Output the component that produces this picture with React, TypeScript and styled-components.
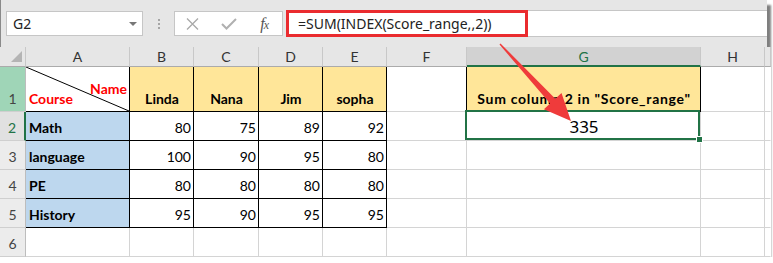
import React from 'react'
import styled, { createGlobalStyle } from 'styled-components'

const GlobalStyle = createGlobalStyle`
  html, body {
    margin: 0;
    background: #fff;
  }
  body {
    font-family: Lato, 'Noto Sans', sans-serif;
  }
`

const Window = styled.div`
  position: relative;
  width: 767px;
  height: 257px;
  background: #e6e6e6;
  box-shadow: 4px 5px 2px rgba(0, 0, 0, 0.5);
`

const FormulaBar = styled.div`
  display: flex;
  align-items: center;
  height: 47px;
  box-sizing: border-box;
  padding: 0 0 0 6px;
  box-shadow: inset 1px 0 #8a8a8a;
`

const NameBox = styled.div`
  display: flex;
  align-items: center;
  justify-content: space-between;
  width: 137px;
  height: 25px;
  box-sizing: border-box;
  padding: 0 5px 0 6px;
  background: #fff;
  border: 1px solid #c6c6c6;
  font: 14px 'Noto Sans', sans-serif;
  color: #222;
`

const DropArrow = styled.span`
  width: 0;
  height: 0;
  border-left: 4px solid transparent;
  border-right: 4px solid transparent;
  border-top: 4px solid #777;
`

const Grip = styled.div`
  display: flex;
  flex-direction: column;
  gap: 2px;
  margin: 0 14px 0 15px;
  span {
    width: 2px;
    height: 2px;
    background: #a5a5a5;
  }
`

const ButtonBox = styled.div`
  display: flex;
  width: 109px;
  height: 25px;
  box-sizing: border-box;
  background: #fff;
  border: 1px solid #c6c6c6;
`

const ToolButton = styled.div`
  flex: 1;
  display: flex;
  align-items: center;
  justify-content: center;
`

const Fx = styled.span`
  font: italic 16px 'Liberation Serif', serif;
  color: #555;
  letter-spacing: -1px;
  small {
    font-size: 12px;
  }
`

const FormulaInput = styled.div`
  flex: 1;
  display: flex;
  align-items: center;
  height: 25px;
  margin-left: 3px;
  background: #fff;
  border: 1px solid #c6c6c6;
  border-right: none;
`

const Highlight = styled.div`
  display: flex;
  align-items: center;
  width: 242px;
  height: 27px;
  margin-left: -1px;
  box-sizing: border-box;
  padding-left: 9px;
  border: 3px solid #ea2b2f;
  font: 14px 'Noto Sans', sans-serif;
  color: #222;
`

const Sheet = styled.div`
  display: grid;
  grid-template-columns: 26px 104px 64px 65px 64px 64px 80px 234px 64px 1fr;
  grid-template-rows: 20px 45px repeat(5, 29px);
  background: #fff;
`

const Corner = styled.div`
  position: relative;
  background: #e6e6e6;
  border-right: 1px solid #c8c8c8;
  border-bottom: 1px solid #ababab;
  &::after {
    content: '';
    position: absolute;
    right: 3px;
    bottom: 4px;
    border-left: 11px solid transparent;
    border-bottom: 11px solid #b4b4b4;
  }
`

const ColHeader = styled.div<{ $active?: boolean }>`
  display: flex;
  align-items: center;
  justify-content: center;
  box-sizing: border-box;
  background: ${(p) => (p.$active ? '#d2d2d2' : '#e6e6e6')};
  border-right: 1px solid #c8c8c8;
  border-bottom: ${(p) => (p.$active ? '2px solid #217346' : '1px solid #ababab')};
  font-size: 14px;
  color: ${(p) => (p.$active ? '#217346' : '#333')};
`

const RowHeader = styled.div<{ $bg?: string; $mark?: boolean }>`
  display: flex;
  align-items: flex-end;
  justify-content: center;
  box-sizing: border-box;
  padding-bottom: 3px;
  line-height: 18px;
  background: ${(p) => p.$bg || '#ececec'};
  border-right: ${(p) => (p.$mark ? '2px solid #217346' : '1px solid #bdbdbd')};
  border-bottom: 1px solid #cfcfcf;
  font-size: 14px;
  color: ${(p) => (p.$mark ? '#217346' : '#444')};
`

const Cell = styled.div<{
  $bg?: string
  $r?: string
  $b?: string
  $align?: 'left' | 'right' | 'center'
  $bold?: boolean
  $color?: string
  $spread?: boolean
}>`
  position: relative;
  display: flex;
  align-items: flex-end;
  justify-content: ${(p) =>
    p.$align === 'right' ? 'flex-end' : p.$align === 'center' ? 'center' : 'flex-start'};
  box-sizing: border-box;
  padding: 0 2px 3px 3px;
  line-height: 18px;
  white-space: nowrap;
  background: ${(p) => p.$bg || '#fff'};
  border-right: 1px solid ${(p) => p.$r || '#d4d4d4'};
  border-bottom: 1px solid ${(p) => p.$b || '#d4d4d4'};
  font-size: 14px;
  font-weight: ${(p) => (p.$bold ? 700 : 400)};
  letter-spacing: ${(p) => (p.$spread ? '0.7px' : 'normal')};
  color: ${(p) => p.$color || '#000'};
`

const SplitCell = styled(Cell)`
  justify-content: space-between;
  color: #ff0000;
  font-weight: 700;
  svg {
    position: absolute;
    inset: 0;
  }
`

const NameLabel = styled.span`
  padding-bottom: 10px;
`

const ActiveCell = styled(Cell)`
  z-index: 1;
  padding-bottom: 3px;
  font: 17px/20px 'Noto Sans', sans-serif;
  &::after {
    content: '';
    position: absolute;
    left: -2px;
    top: -2px;
    right: 0;
    bottom: 0;
    border: 2px solid #217346;
  }
  &::before {
    content: '';
    position: absolute;
    right: -3px;
    bottom: -3px;
    width: 5px;
    height: 5px;
    background: #217346;
    border: 1px solid #fff;
    z-index: 2;
  }
`

const Pointer = styled.svg`
  position: absolute;
  top: 0;
  left: 0;
  pointer-events: none;
  z-index: 5;
`

const YELLOW = '#ffe699'
const BLUE = '#bdd7ee'
const BLACK = '#000'

const columns = ['A', 'B', 'C', 'D', 'E', 'F', 'G', 'H', '']
const names = ['Linda', 'Nana', 'Jim', 'sopha']
const scores: [string, number[]][] = [
  ['Math', [80, 75, 89, 92]],
  ['language', [100, 90, 95, 80]],
  ['PE', [80, 80, 80, 80]],
  ['History', [95, 90, 95, 95]],
]

function TrailingCells({ row }: { row: number }) {
  return (
    <>
      <Cell $r={row === 1 ? BLACK : undefined} />
      {row === 1 ? (
        <Cell $bg={YELLOW} $r={BLACK} $b={BLACK} $align="center" $bold $spread>
          Sum column 2 in "Score_range"
        </Cell>
      ) : row === 2 ? (
        <ActiveCell $align="center">335</ActiveCell>
      ) : (
        <Cell />
      )}
      <Cell />
      <Cell $r="transparent" />
    </>
  )
}

export default function App() {
  return (
    <Window>
      <GlobalStyle />
      <FormulaBar>
        <NameBox>
          G2
          <DropArrow />
        </NameBox>
        <Grip>
          <span />
          <span />
          <span />
        </Grip>
        <ButtonBox>
          <ToolButton>
            <svg width="13" height="12" viewBox="0 0 13 12">
              <path d="M1 0.5 L12 11.5 M12 0.5 L1 11.5" stroke="#a9a9a9" strokeWidth="1.3" />
            </svg>
          </ToolButton>
          <ToolButton>
            <svg width="16" height="12" viewBox="0 0 16 12">
              <path d="M1 6 L5.5 10.5 L15 1" fill="none" stroke="#b0b0b0" strokeWidth="2" />
            </svg>
          </ToolButton>
          <ToolButton>
            <Fx>
              f<small>x</small>
            </Fx>
          </ToolButton>
        </ButtonBox>
        <FormulaInput>
          <Highlight>=SUM(INDEX(Score_range,,2))</Highlight>
        </FormulaInput>
      </FormulaBar>

      <Sheet>
        <Corner />
        {columns.map((c, i) => (
          <ColHeader key={i} $active={c === 'G'}>
            {c}
          </ColHeader>
        ))}

        <RowHeader $bg="#9fd5b7">1</RowHeader>
        <SplitCell $r={BLACK} $b={BLACK}>
          <svg width="100%" height="100%" preserveAspectRatio="none" viewBox="0 0 100 100">
            <line x1="0" y1="0" x2="100" y2="100" stroke="#000" strokeWidth="1" vectorEffect="non-scaling-stroke" />
          </svg>
          <span>Course</span>
          <NameLabel>Name</NameLabel>
        </SplitCell>
        {names.map((n) => (
          <Cell key={n} $bg={YELLOW} $r={BLACK} $b={BLACK} $align="center" $bold>
            {n}
          </Cell>
        ))}
        <TrailingCells row={1} />

        {scores.map(([subject, vals], i) => (
          <React.Fragment key={subject}>
            <RowHeader $bg={i === 0 ? '#e1e1e1' : undefined} $mark={i === 0}>
              {i + 2}
            </RowHeader>
            <Cell $bg={BLUE} $r={BLACK} $b={BLACK} $bold>
              {subject}
            </Cell>
            {vals.map((v, j) => (
              <Cell key={j} $r={BLACK} $b={BLACK} $align="right">
                {v}
              </Cell>
            ))}
            <TrailingCells row={i + 2} />
          </React.Fragment>
        ))}

        <RowHeader>6</RowHeader>
        {columns.map((c, i) => (
          <Cell key={i} $r={i === 8 ? 'transparent' : undefined} />
        ))}
      </Sheet>

      <Pointer width="767" height="257" viewBox="0 0 767 257">
        <polygon
          points="499.5,44.5 550.1,103.5 543.9,109.2 571,121 561.5,93 555.3,98.7 500.5,43.5"
          fill="#ef3b3b"
        />
      </Pointer>
    </Window>
  )
}
